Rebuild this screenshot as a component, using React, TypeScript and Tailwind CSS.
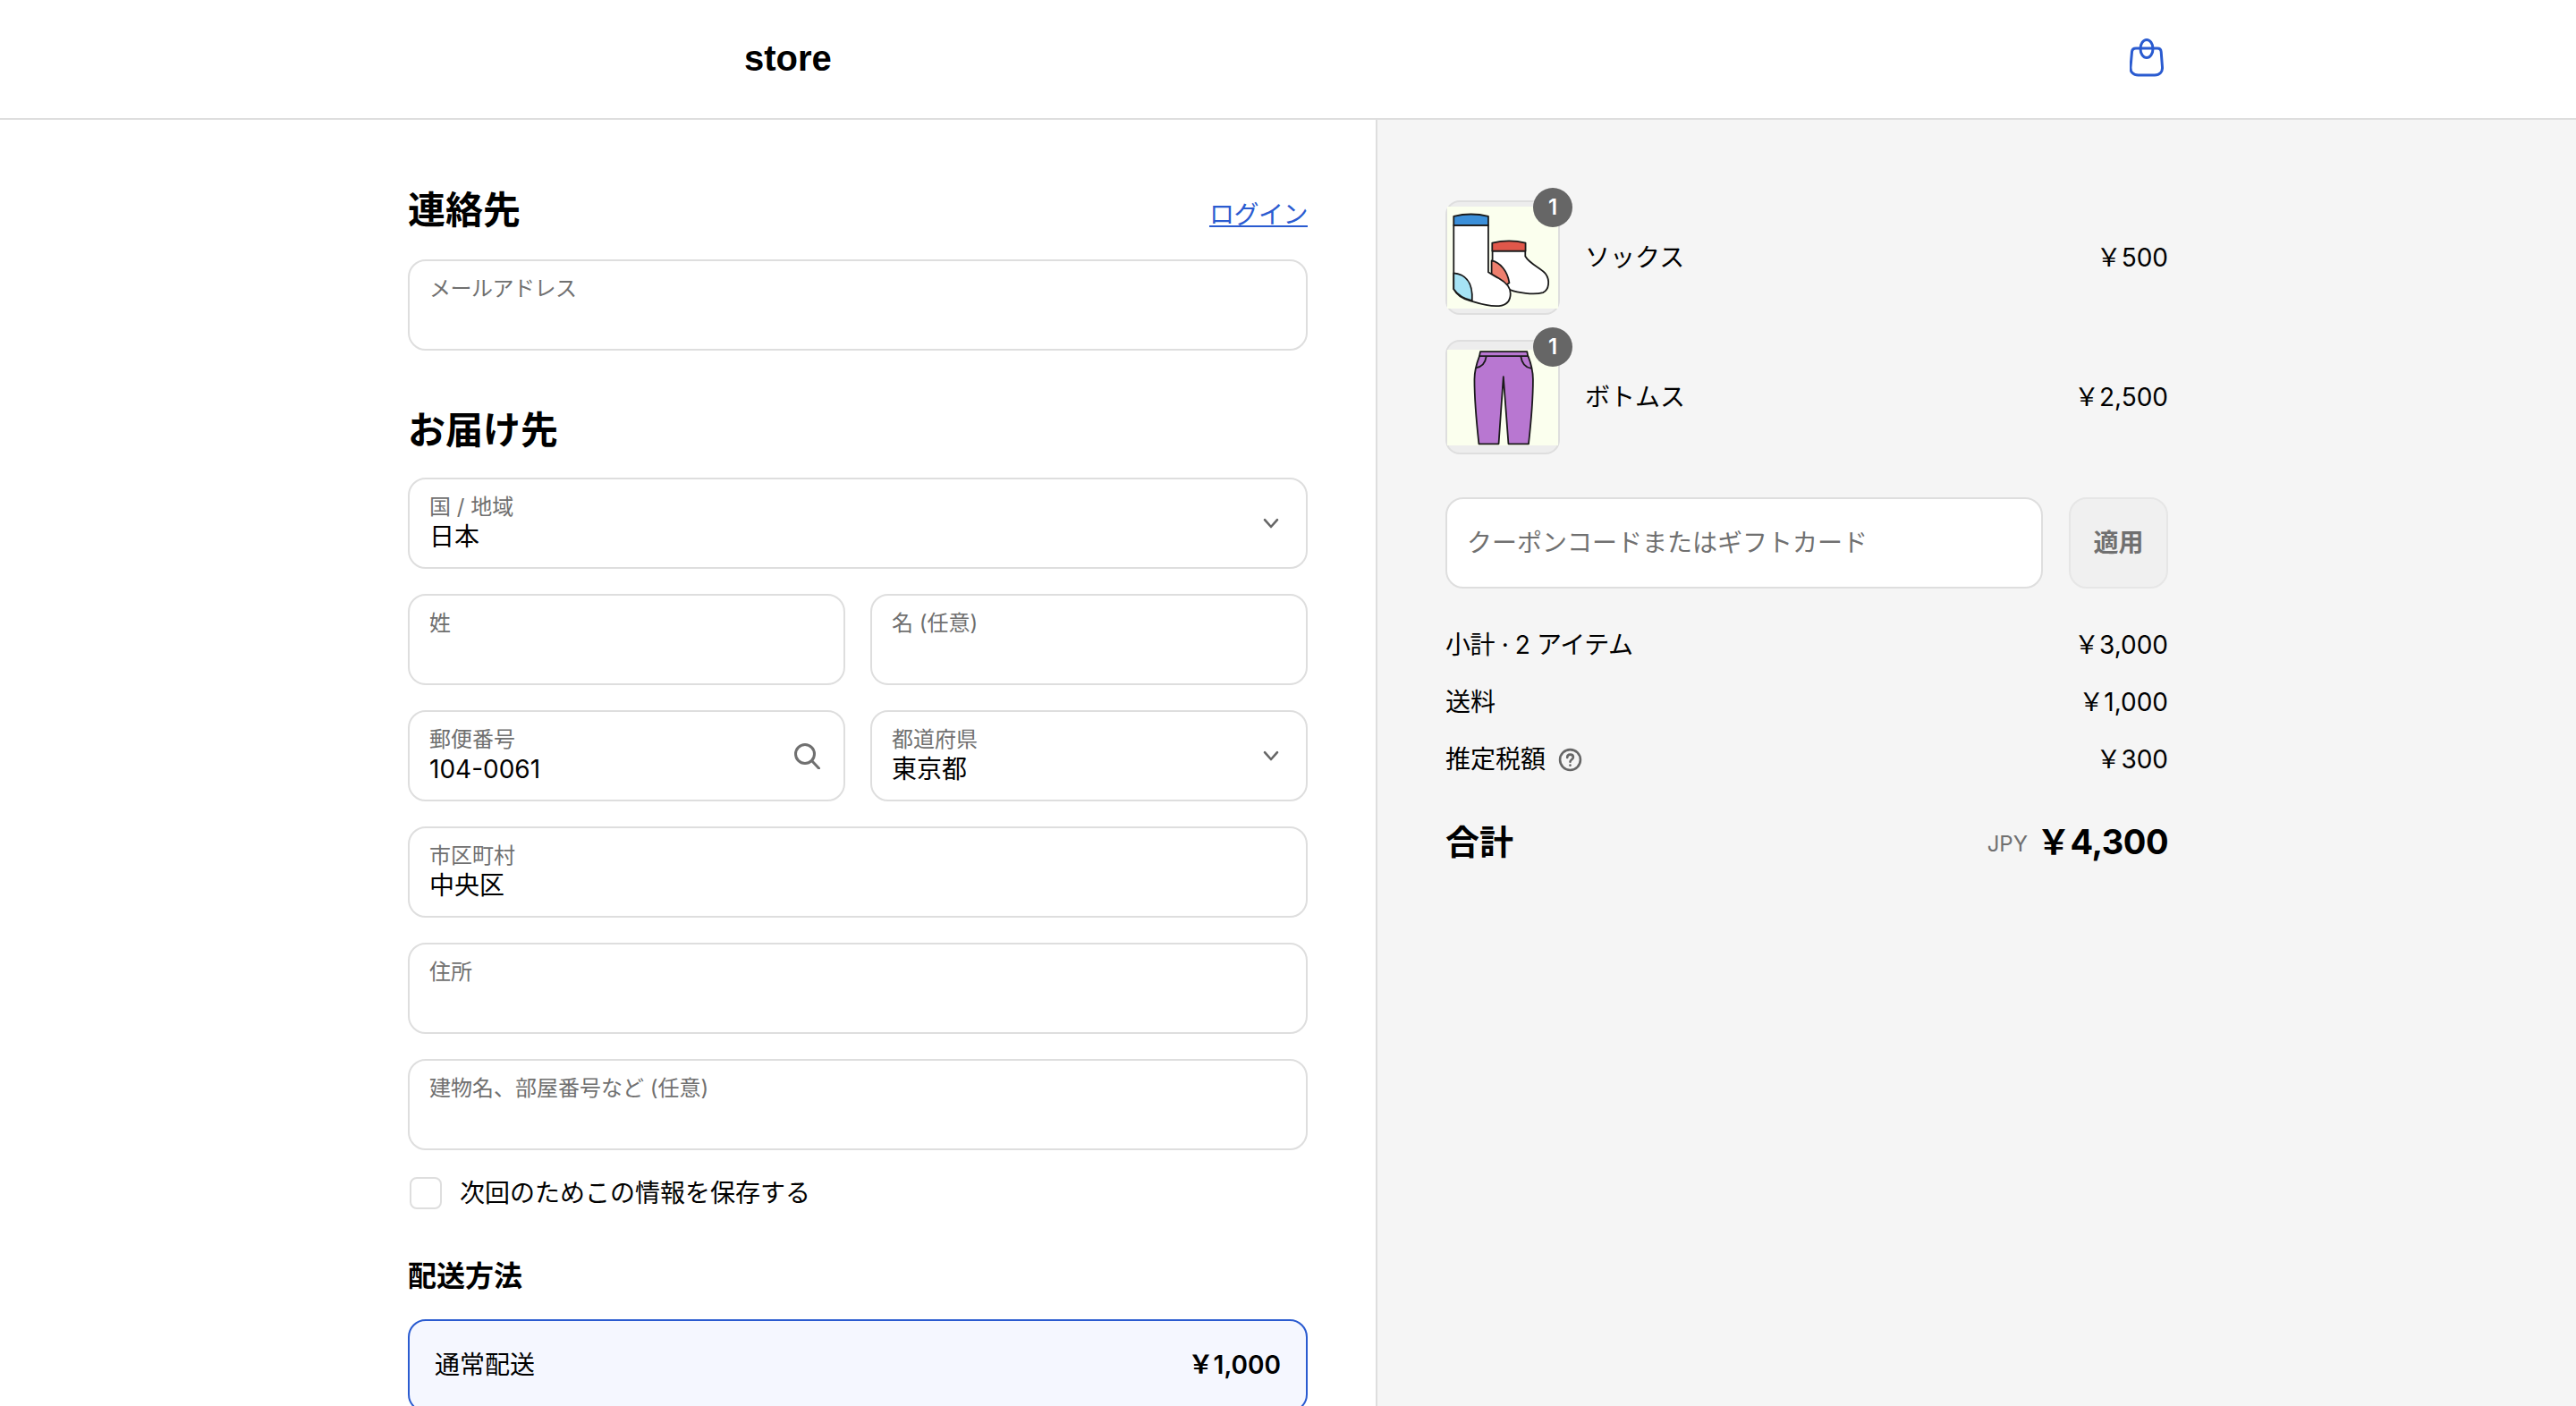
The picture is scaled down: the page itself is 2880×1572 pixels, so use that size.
import React from "react";

const Chevron = () => (
  <svg width="18" height="12" viewBox="0 0 18 12" fill="none" stroke="#666666" strokeWidth="2.6" strokeLinecap="round" strokeLinejoin="round">
    <path d="M2 2.200L9 10l7-7.800" />
  </svg>
);

const SearchIcon = () => (
  <svg width="30" height="30" viewBox="0 0 30 30" fill="none" stroke="#707070" strokeWidth="3" strokeLinecap="round" className="-mr-[4px]">
    <circle cx="13" cy="13" r="10.5" />
    <path d="M21 21l7.500 8" />
  </svg>
);

const Bag = () => (
  <svg width="38" height="44" viewBox="0 0 38 44" fill="none" stroke="#2a5bd0" strokeWidth="3" className="mr-[5px] mb-[4px]">
    <path d="M7 12h24c2.500 0 4 1.500 4.200 4l1.300 17c.4 5.500-3 9-8.500 9H9.500C4 42 .6 38.500 1 33l1.500-17C2.700 13.500 4.500 12 7 12z" />
    <ellipse cx="19" cy="12.500" rx="7" ry="10" />
  </svg>
);

const Help = () => (
  <svg width="27" height="27" viewBox="0 0 26 26" fill="none" stroke="#666666" strokeWidth="2.500" strokeLinecap="round">
    <circle cx="13" cy="13" r="11" />
    <path d="M9.800 10.500c0-2 1.500-3.200 3.300-3.200s3.200 1.200 3.200 2.900c0 2.600-3.300 2.500-3.300 5" />
    <path d="M13 18.800v.2" />
  </svg>
);

const Socks = () => (
  <svg viewBox="0 0 125 115" className="block w-full h-[114px] bg-[#fbffee]" stroke="#1a1a1a" strokeWidth="1.800" strokeLinejoin="round">
    <path d="M51 50v14c-1 6 12 28 20 30 8 3 26 6 37 3 7-3 8-14 3-21-4-6-18-11-23-20V50z" fill="#ffffff" />
    <path d="M50 61c10 2 18 12 20 25l-6 4-14-14z" fill="#ee7f6e" />
    <path d="M50.700 50V41c12-3 26-3 37.600 0v9z" fill="#e0574a" />
    <path d="M7.300 21v72c3 6 10 11 18 13 10 3 20 7 33 6 9-1 13-6 13-14 0-8-6-13-13-17-5-3-9-5-12-7V21z" fill="#ffffff" />
    <path d="M7.300 75c11 1 22 8 20.700 31-9-2-16-6-20.700-13z" fill="#a6e3f5" />
    <path d="M7.300 21V11c12-3 27-3 39 0v10z" fill="#3b8fd9" />
  </svg>
);

const Pants = () => (
  <svg viewBox="0 0 125 107" className="block w-full h-[107px] bg-[#fbffee]" stroke="#1a1a1a" strokeWidth="1.800" strokeLinejoin="round">
    <path d="M36.300 6.700C32 18 30.700 26 30.700 33c0 25 2.500 50 5 72.700H58L63.300 30 69 105.700h22.700c2.500-22 5-48 5-72.700 0-7-1.500-16-5.500-26.300z" fill="#b877d1" />
    <path d="M37.300 1.700H90l.9 5H36.300z" fill="#b877d1" />
    <path d="M44 7.300c-1 7-5 11.700-11.700 12.700M83 7.300c1 7 5 12.400 11.700 13.400" fill="none" />
  </svg>
);

const Field = ({ label, value, right, labelClass }: { label: string; value?: string; right?: React.ReactNode; labelClass?: string }) => (
  <div className="h-[102px] rounded-[20px] border-2 border-[#dedede] bg-white pl-[22px] pr-[30px] flex items-center justify-between">
    <div className="self-start pt-[15px]">
      <div className={"text-[24px] leading-[32px] text-[#707070] " + (labelClass ?? "")}>{label}</div>
      {value && <div className="text-[28px] leading-[34px] text-black">{value}</div>}
    </div>
    {right}
  </div>
);

const Item = ({ art, name, price }: { art: React.ReactNode; name: string; price: string }) => (
  <div className="flex items-center">
    <div className="relative w-[128px] h-[128px] rounded-[16px] border-2 border-[#dedede] bg-[#ededed] flex items-center mr-[28px]">
      <div className="w-full overflow-hidden">{art}</div>
      <div className="absolute -top-[16px] -right-[16px] w-[44px] h-[44px] rounded-full bg-[#666666] text-white text-[24px] font-semibold flex items-center justify-center">1</div>
    </div>
    <div className="flex-1 text-[28px] leading-[42px] text-black">{name}</div>
    <div className="text-[28px] leading-[42px] text-black">{price}</div>
  </div>
);

const Row = ({ label, value }: { label: React.ReactNode; value: string }) => (
  <div className="flex justify-between items-center h-[42px] text-[28px] leading-[42px] text-black">
    <div className="flex items-center">{label}</div>
    <div>{value}</div>
  </div>
);

export default function App() {
  return (
    <div className="h-screen overflow-hidden bg-white text-black font-['Inter','Noto_Sans_CJK_JP',sans-serif]">
      <header className="h-[134px] border-b-2 border-[#dedede] flex items-center justify-between pl-[832px] pr-[456px]">
        <div className="text-[40px] font-bold leading-none mb-[3px] font-['Liberation_Sans',sans-serif]">store</div>
        <Bag />
      </header>
      <div className="flex h-[1438px]">
        <main className="w-[1540px] shrink-0 border-r-2 border-[#dedede] pl-[456px] pr-[76px] pt-[73px]">
          <div className="flex items-end justify-between h-[56px]">
            <h2 className="text-[42px] leading-[56px] font-bold">連絡先</h2>
            <a className="text-[28px] leading-[42px] mb-[2px] tracking-[-0.5px] text-[#2a5bd0] underline">ログイン</a>
          </div>
          <div className="mt-[27px]"><Field label="メールアドレス" labelClass="tracking-[-0.5px]" /></div>
          <h2 className="mt-[61px] text-[42px] leading-[56px] font-bold">お届け先</h2>
          <div className="mt-[25px] grid grid-cols-2 gap-x-[28px] gap-y-[28px]">
            <div className="col-span-2"><Field label="国 / 地域" value="日本" right={<Chevron />} /></div>
            <Field label="姓" />
            <Field label="名 (任意)" />
            <Field label="郵便番号" value="104-0061" right={<SearchIcon />} />
            <Field label="都道府県" value="東京都" right={<Chevron />} />
            <div className="col-span-2"><Field label="市区町村" value="中央区" /></div>
            <div className="col-span-2"><Field label="住所" /></div>
            <div className="col-span-2"><Field label="建物名、部屋番号など (任意)" /></div>
          </div>
          <label className="mt-[30px] flex items-center">
            <span className="w-[36px] h-[36px] ml-[2px] rounded-[8px] border-2 border-[#dedede] bg-white mr-[20px]" />
            <span className="text-[28px] leading-[36px]">次回のためこの情報を保存する</span>
          </label>
          <h3 className="mt-[53px] text-[32px] leading-[44px] font-bold">配送方法</h3>
          <div className="mt-[26px] h-[104px] rounded-[20px] border-2 border-[#2a5bd0] bg-[#f5f7ff] pl-[28px] pr-[28px] flex items-center justify-between">
            <span className="text-[28px] mb-[2px]">通常配送</span>
            <span className="text-[28px] font-semibold mb-[2px]">￥1,000</span>
          </div>
        </main>
        <aside className="flex-1 bg-[#f5f5f5] pl-[76px] pr-[456px] pt-[90px]">
          <div className="flex flex-col gap-[28px]">
            <Item art={<Socks />} name="ソックス" price="￥500" />
            <Item art={<Pants />} name="ボトムス" price="￥2,500" />
          </div>
          <div className="mt-[48px] flex gap-[29px]">
            <div className="flex-1 h-[102px] rounded-[20px] border-2 border-[#dedede] bg-white pl-[22px] flex items-center text-[28px] text-[#707070]">クーポンコードまたはギフトカード</div>
            <div className="w-[111px] h-[102px] rounded-[20px] border-2 border-[#e6e6e6] bg-[#f0f0f0] flex items-center justify-center text-[28px] font-semibold text-[#707070]">適用</div>
          </div>
          <div className="mt-[42px] flex flex-col gap-[22px]">
            <Row label={<span className="tracking-[-0.4px]">小計 · 2 アイテム</span>} value="￥3,000" />
            <Row label="送料" value="￥1,000" />
            <Row label={<>推定税額<span className="ml-[14px] flex"><Help /></span></>} value="￥300" />
          </div>
          <div className="mt-[45px] flex items-center justify-between h-[52px]">
            <div className="text-[38px] font-bold">合計</div>
            <div className="flex items-center">
              <span className="text-[24px] text-[#707070] mr-[10px] mt-[6px]">JPY</span>
              <span className="text-[38px] font-bold tracking-[-0.5px]">￥4,300</span>
            </div>
          </div>
        </aside>
      </div>
    </div>
  );
}
